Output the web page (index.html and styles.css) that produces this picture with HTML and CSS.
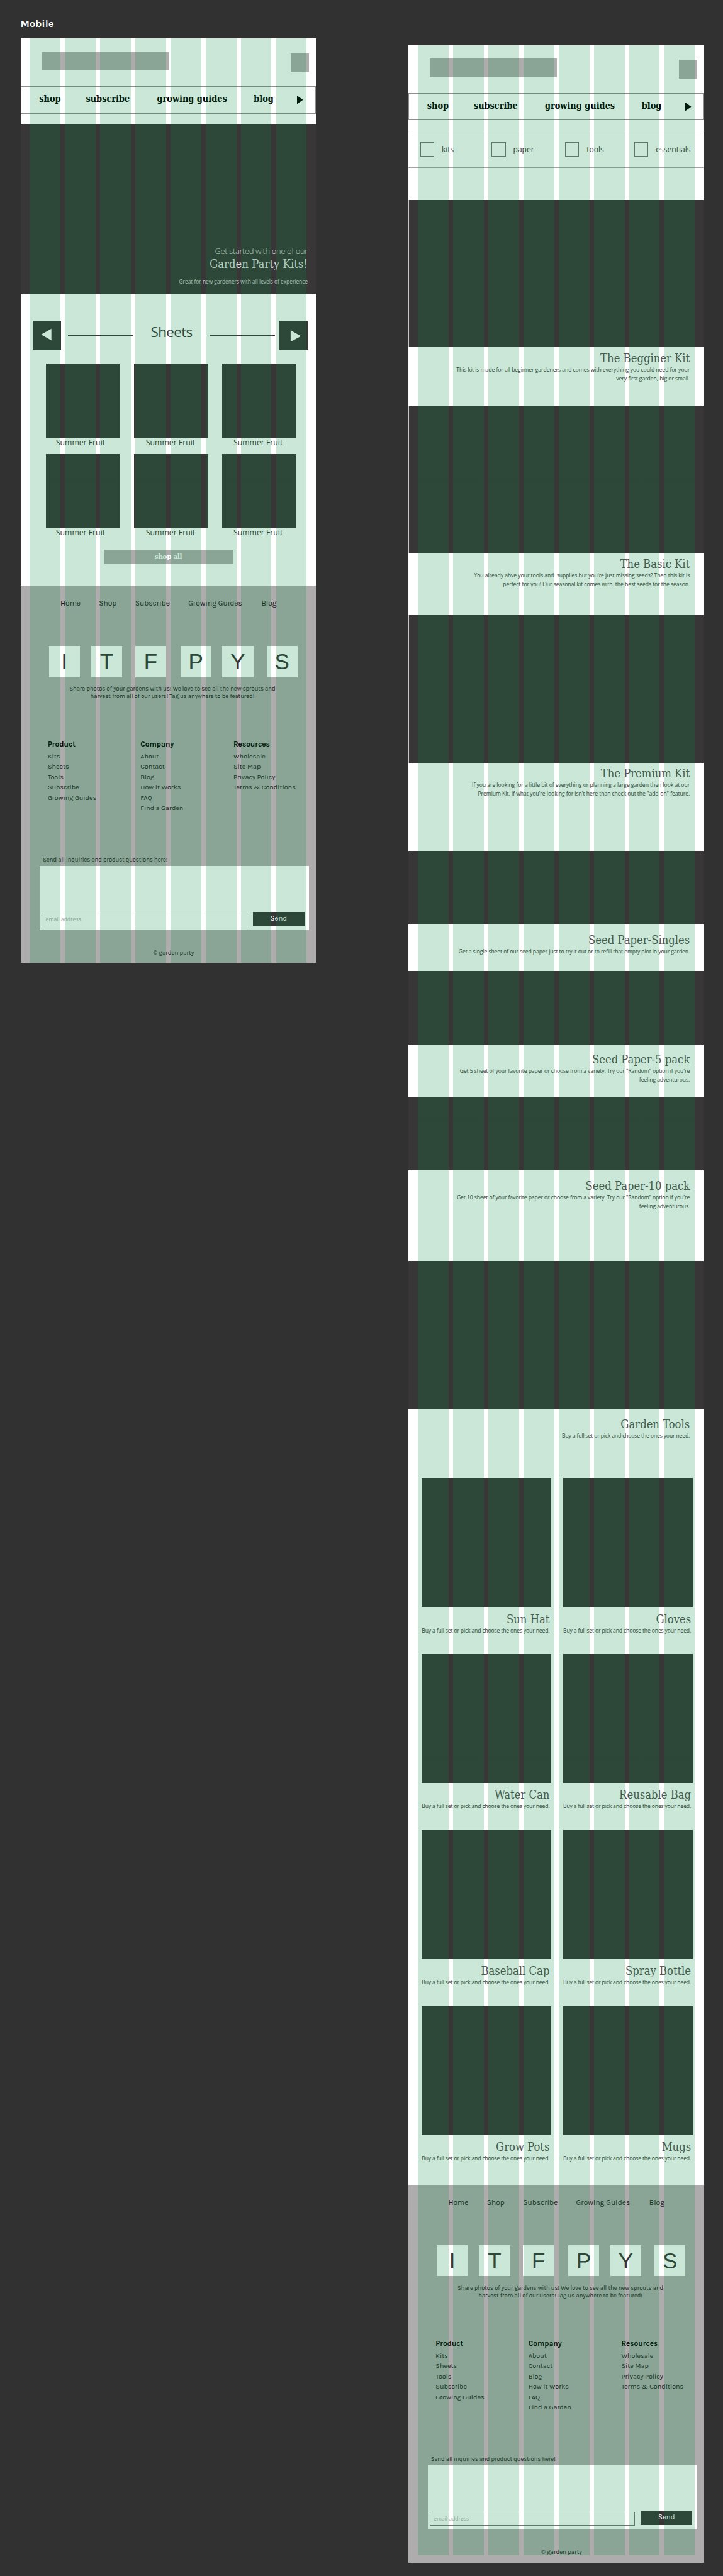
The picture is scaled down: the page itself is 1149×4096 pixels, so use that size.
FILE: index.html
```html
<!DOCTYPE html>
<html lang="en">
<head>
<meta charset="utf-8">
<title>Garden Party – Mobile</title>
<link rel="stylesheet" href="styles.css">
</head>
<body>
<main class="board">
  <section class="column">
    <h1 class="board-label">Mobile</h1>
    <div class="frame frame-home">
      <header class="masthead"><div class="brand"></div><div class="account"></div></header>
      <nav class="main-nav">
        <a>shop</a><a>subscribe</a><a>growing guides</a><a>blog</a>
        <svg class="nav-arrow" viewBox="0 0 10 14"><polygon points="0,0 10,7 0,14"/></svg>
      </nav>
      <section class="hero">
        <p class="hero-lead">Get started with one of our</p>
        <h2 class="hero-title">Garden Party Kits!</h2>
        <p class="hero-note">Great for new gardeners with all levels of experience</p>
      </section>
      <div class="carousel-head">
        <svg class="arrow-box" viewBox="0 0 47.6 47.6"><polygon points="31,13.2 31,32.5 13.9,22.8"/></svg>
        <span class="rule"></span>
        <h2 class="carousel-title">Sheets</h2>
        <span class="rule"></span>
        <svg class="arrow-box arrow-box-next" viewBox="0 0 47.6 47.6"><polygon points="18.7,15.8 18.7,35 35.8,25.4"/></svg>
      </div>
      <div class="sheets">
        <figure><div class="thumb"></div><figcaption>Summer Fruit</figcaption></figure>
        <figure><div class="thumb"></div><figcaption>Summer Fruit</figcaption></figure>
        <figure><div class="thumb"></div><figcaption>Summer Fruit</figcaption></figure>
        <figure><div class="thumb"></div><figcaption>Summer Fruit</figcaption></figure>
        <figure><div class="thumb"></div><figcaption>Summer Fruit</figcaption></figure>
        <figure><div class="thumb"></div><figcaption>Summer Fruit</figcaption></figure>
      </div>
      <div class="shop-all">shop all</div>
      <footer class="footer">
        <nav class="footer-nav"><a>Home</a><a>Shop</a><a>Subscribe</a><a>Growing Guides</a><a>Blog</a></nav>
        <div class="socials"><span>I</span><span>T</span><span>F</span><span>P</span><span>Y</span><span>S</span></div>
        <p class="share">Share photos of your gardens with us! We love to see all the new sprouts and<br>harvest from all of our users! Tag us anywhere to be featured!</p>
        <div class="links">
          <div><h3>Product</h3><ul><li>Kits</li><li>Sheets</li><li>Tools</li><li>Subscribe</li><li>Growing Guides</li></ul></div>
          <div><h3>Company</h3><ul><li>About</li><li>Contact</li><li>Blog</li><li>How it Works</li><li>FAQ</li><li>Find a Garden</li></ul></div>
          <div><h3>Resources</h3><ul><li>Wholesale</li><li>Site Map</li><li>Privacy Policy</li><li>Terms &amp; Conditions</li></ul></div>
        </div>
        <p class="ask">Send all inquiries and product questions here!</p>
        <div class="contact"><div class="email">email address</div><div class="send">Send</div></div>
        <p class="legal">© garden party</p>
      </footer>
    </div>
  </section>

  <section class="column column-shop">
    <div class="frame frame-shop">
      <header class="masthead"><div class="brand"></div><div class="account"></div></header>
      <nav class="main-nav">
        <a>shop</a><a>subscribe</a><a>growing guides</a><a>blog</a>
        <svg class="nav-arrow" viewBox="0 0 10 14"><polygon points="0,0 10,7 0,14"/></svg>
      </nav>
      <div class="filters">
        <label><i></i>kits</label><label><i></i>paper</label><label><i></i>tools</label><label><i></i>essentials</label>
      </div>

      <article class="product kit kit-beginner">
        <div class="photo"></div>
        <h2>The Begginer Kit</h2>
        <p>This kit is made for all beginner gardeners and comes with everything you could need for your<br>very first garden, big or small.</p>
      </article>
      <article class="product kit kit-basic">
        <div class="photo"></div>
        <h2>The Basic Kit</h2>
        <p>You already ahve your tools and&nbsp; supplies but you're just missing seeds? Then this kit is<br>perfect for you! Our seasonal kit comes with&nbsp; the best seeds for the season.</p>
      </article>
      <article class="product kit kit-premium">
        <div class="photo"></div>
        <h2>The Premium Kit</h2>
        <p>If you are looking for a little bit of everything or planning a large garden then look at our<br>Premium Kit. If what you're looking for isn't here than check out the "add-on" feature.</p>
      </article>
      <article class="product paper paper-single">
        <div class="photo"></div>
        <h2>Seed Paper-Singles</h2>
        <p>Get a single sheet of our seed paper just to try it out or to refill that empty plot in your garden.</p>
      </article>
      <article class="product paper paper-five">
        <div class="photo"></div>
        <h2>Seed Paper-5 pack</h2>
        <p>Get 5 sheet of your favorite paper or choose from a variety. Try our "Random" option if you're<br>feeling adventurous.</p>
      </article>
      <article class="product paper paper-ten">
        <div class="photo"></div>
        <h2>Seed Paper-10 pack</h2>
        <p>Get 10 sheet of your favorite paper or choose from a variety. Try our "Random" option if you're<br>feeling adventurous.</p>
      </article>
      <article class="product tools">
        <div class="photo"></div>
        <h2>Garden Tools</h2>
        <p>Buy a full set or pick and choose the ones your need.</p>
      </article>

      <div class="catalog">
        <article><div class="tile"></div><h2>Sun Hat</h2><p>Buy a full set or pick and choose the ones your need.</p></article>
        <article><div class="tile"></div><h2>Gloves</h2><p>Buy a full set or pick and choose the ones your need.</p></article>
        <article><div class="tile"></div><h2>Water Can</h2><p>Buy a full set or pick and choose the ones your need.</p></article>
        <article><div class="tile"></div><h2>Reusable Bag</h2><p>Buy a full set or pick and choose the ones your need.</p></article>
        <article><div class="tile"></div><h2>Baseball Cap</h2><p>Buy a full set or pick and choose the ones your need.</p></article>
        <article><div class="tile"></div><h2>Spray Bottle</h2><p>Buy a full set or pick and choose the ones your need.</p></article>
        <article><div class="tile"></div><h2>Grow Pots</h2><p>Buy a full set or pick and choose the ones your need.</p></article>
        <article><div class="tile"></div><h2>Mugs</h2><p>Buy a full set or pick and choose the ones your need.</p></article>
      </div>

      <footer class="footer">
        <nav class="footer-nav"><a>Home</a><a>Shop</a><a>Subscribe</a><a>Growing Guides</a><a>Blog</a></nav>
        <div class="socials"><span>I</span><span>T</span><span>F</span><span>P</span><span>Y</span><span>S</span></div>
        <p class="share">Share photos of your gardens with us! We love to see all the new sprouts and<br>harvest from all of our users! Tag us anywhere to be featured!</p>
        <div class="links">
          <div><h3>Product</h3><ul><li>Kits</li><li>Sheets</li><li>Tools</li><li>Subscribe</li><li>Growing Guides</li></ul></div>
          <div><h3>Company</h3><ul><li>About</li><li>Contact</li><li>Blog</li><li>How it Works</li><li>FAQ</li><li>Find a Garden</li></ul></div>
          <div><h3>Resources</h3><ul><li>Wholesale</li><li>Site Map</li><li>Privacy Policy</li><li>Terms &amp; Conditions</li></ul></div>
        </div>
        <p class="ask">Send all inquiries and product questions here!</p>
        <div class="contact"><div class="email">email address</div><div class="send">Send</div></div>
        <p class="legal">© garden party</p>
      </footer>
    </div>
  </section>
</main>
</body>
</html>
```
FILE: styles.css
```css
/* 1rem is ten design pixels */
html { font-size: 9.574px; }
* { box-sizing: border-box; margin: 0; padding: 0; }
body {
  background: #313131;
  color: #1c1a1b;
  font-family: Karla, "Liberation Sans", sans-serif;
  overflow: hidden;
}
h1, h2, h3 { font-weight: 400; }
ul { list-style: none; }

.board {
  display: grid;
  grid-template-columns: 49.03rem 49.07rem;
  column-gap: 15.36rem;
  align-items: start;
  padding-left: 3.4rem;
  height: 4096px;
}
.column-shop { padding-top: 7.51rem; }
.board-label {
  height: 6.4rem;
  padding-top: 2.8rem;
  color: #fff;
  font-weight: 700;
  font-size: 1.72rem;
  line-height: 2.2rem;
}

/* Artboards, with the eight-column layout grid laid over everything */
.frame { position: relative; background: #fff; overflow: hidden; }
.frame-home { height: 153.53rem; }
.frame-shop { height: 418.17rem; }
.frame::after {
  content: "";
  position: absolute;
  inset: 0 1.52rem 0 1.53rem;
  pointer-events: none;
  background: repeating-linear-gradient(90deg, rgba(0, 138, 61, .206) 0 5.09rem, transparent 5.09rem 5.845rem);
}
.frame-shop::after { bottom: 1.3rem; }

.masthead {
  display: flex;
  justify-content: space-between;
  height: 7.92rem;
  padding: 2.23rem 1.12rem 0 3.5rem;
}
.brand, .account { height: 3.07rem; background: #aeacad; }
.brand { width: 21.1rem; }
.account { width: 3.08rem; margin-top: .2rem; }

.main-nav {
  display: grid;
  grid-template-columns: 7.75rem 11.8rem 16.07rem 7.23rem auto;
  align-items: center;
  height: 4.56rem;
  padding-left: 3rem;
  border: 1px solid #8f8d8e;
  color: #000;
  font: 700 1.5rem/2rem "DejaVu Serif Condensed", "DejaVu Serif", serif;
}
.main-nav a { padding-bottom: .25rem; }
.nav-arrow { width: 1rem; height: 1.42rem; fill: #000; }

.hero {
  display: flex;
  flex-direction: column;
  justify-content: flex-end;
  align-items: flex-end;
  height: 28.1rem;
  margin-top: 1.75rem;
  padding: 0 1.36rem 1.25rem 0;
  background: #383637;
  color: #fff;
}
.hero-lead { font: 300 1.35rem/2rem "Open Sans", sans-serif; letter-spacing: -.037rem; color: #d8d8d8; }
.hero-title { font: 400 1.92rem/2.4rem "DejaVu Serif Condensed", serif; color: #dcdcdc; }
.hero-note { margin-top: .95rem; font: 400 .875rem/1.4rem "Open Sans", sans-serif; color: #cfcfcf; }

.carousel-head { display: flex; align-items: center; height: 4.78rem; margin-top: 4.59rem; padding-left: 2rem; }
.arrow-box { width: 4.76rem; height: 4.78rem; background: #383637; fill: #fff; }
.rule { width: 10.89rem; height: 1px; margin-left: 1.1rem; background: #383637; }
.carousel-title {
  width: 12.65rem;
  padding-bottom: 1.08rem;
  color: #383637;
  font: 400 2.35rem/3rem "Open Sans", sans-serif;
  letter-spacing: -.07rem;
  text-align: center;
}
.carousel-title + .rule { margin-left: 0; }
.arrow-box-next { margin-left: .72rem; }

.sheets {
  display: grid;
  grid-template-columns: repeat(3, 12.25rem);
  gap: 1.19rem 2.39rem;
  margin-top: 2.33rem;
  padding-left: 4.24rem;
}
.thumb { height: 12.24rem; background: #383637; }
.sheets figcaption {
  padding-right: .8rem;
  color: #383637;
  font: 400 1.28rem/1.6rem "Open Sans", sans-serif;
  text-align: center;
}
.sheets figure:nth-child(3n + 2) figcaption { padding-right: .2rem; }
.sheets figure:nth-child(3n) figcaption { padding-right: .4rem; }
.sheets figure:nth-child(n + 4) figcaption { margin-top: -.1rem; }

.shop-all {
  width: 21.46rem;
  height: 2.43rem;
  margin: 2.07rem 0 3.6rem 13.81rem;
  background: #aeacad;
  color: #fff;
  font: 700 1.2rem/2.3rem "DejaVu Serif Condensed", serif;
  letter-spacing: -.03rem;
  text-align: center;
}

/* Footer shared by both artboards */
.footer { height: 62.7rem; padding-top: 2.16rem; background: #aeacad; }
.footer-nav {
  display: grid;
  grid-template-columns: 6.39rem 6rem 8.82rem 12.14rem auto;
  padding-left: 6.64rem;
  font-size: 1.25rem;
  line-height: 1.6rem;
}
.socials {
  display: grid;
  grid-template-columns: 7.04rem 7.29rem 7.5rem 6.97rem 7.35rem 5.15rem;
  margin-top: 6.24rem;
  padding-left: 4.7rem;
}
.socials span {
  width: 5.15rem;
  height: 5.16rem;
  background: #fff;
  color: #383637;
  font: 400 3.66rem/5.2rem "Liberation Sans", Arial, sans-serif;
  text-align: center;
}
.share { margin-top: 1.31rem; padding-left: 1.4rem; font-size: .983rem; line-height: 1.25rem; text-align: center; }
.links { display: grid; grid-template-columns: 15.39rem 15.43rem auto; height: 12.42rem; margin-top: 6.45rem; padding-left: 4.53rem; }
.links h3 { margin-bottom: .38rem; color: #000; font-weight: 700; font-size: 1.24rem; line-height: 1.72rem; }
.links li { font-size: 1.13rem; line-height: 1.72rem; }
.ask { margin-top: 6.91rem; padding-left: 3.74rem; font-size: .98rem; line-height: 1.4rem; }
.contact {
  display: flex;
  align-items: flex-end;
  width: 44.69rem;
  height: 10.67rem;
  margin: .43rem 0 0 3.2rem;
  padding: 0 0 .67rem .33rem;
  background: #fff;
}
.email {
  width: 34.1rem;
  height: 2.35rem;
  padding-left: .55rem;
  border: 1px solid #777576;
  color: #aeacad;
  font: 400 .9rem/2.1rem "Open Sans", sans-serif;
}
.send {
  width: 8.54rem;
  height: 2.33rem;
  margin: 0 0 .13rem .96rem;
  background: #383637;
  color: #fff;
  font-size: 1.2rem;
  line-height: 2.2rem;
  text-align: center;
}
.legal { margin-top: 3.01rem; padding-left: 1.8rem; font-size: 1.01rem; line-height: 1.4rem; text-align: center; }

/* Shop artboard */
.filters {
  display: grid;
  grid-template-columns: 11.87rem 12.18rem 11.5rem auto;
  align-items: center;
  height: 6.1rem;
  margin-top: 1.78rem;
  padding-left: 1.96rem;
  border-top: 1px solid #b5b3b4;
  border-bottom: 1px solid #a5a3a4;
  color: #383637;
  font: 400 1.26rem/2rem "Open Sans", sans-serif;
}
.filters label { display: flex; align-items: center; gap: 1.23rem; }
.filters i { width: 2.34rem; height: 2.33rem; border: 1px solid #777576; }

.product { padding-right: 2.36rem; text-align: right; }
.product .photo { height: 24.5rem; margin-right: -2.36rem; background: #383637; }
.kit .photo { border-left: 1px solid #c9c9c9; }
.paper .photo { height: 12.24rem; }
.product h2, .catalog h2 { color: #555354; font: 400 1.91rem/2.3rem "DejaVu Serif Condensed", serif; }
.product p, .catalog p { color: #383637; font: 400 .9rem/1.47rem "Open Sans", sans-serif; white-space: nowrap; }
.kit p { letter-spacing: -.006rem; }
.paper p { letter-spacing: -.01rem; }
.tools p, .catalog p { letter-spacing: -.016rem; }
.product h2 { padding-top: 1.43rem; }
.kit h2 { padding-top: .68rem; }
.kit-beginner { height: 34.21rem; margin-top: 5.3rem; }
.kit-basic { height: 34.8rem; }
.kit-premium { height: 39.18rem; }
.paper-single { height: 19.87rem; }
.paper-five { height: 20.95rem; }
.paper-ten { height: 27.29rem; }
.tools { height: 35.98rem; }

.catalog {
  display: grid;
  grid-template-columns: 21.5rem 21.47rem;
  grid-auto-rows: 29.24rem;
  column-gap: 2rem;
  margin-bottom: .5rem;
  padding-left: 2.21rem;
  text-align: right;
}
.tile { height: 21.4rem; margin-bottom: .92rem; background: #383637; }
.catalog h2, .catalog p { padding-right: .27rem; }
.catalog p { display: flex; justify-content: flex-end; }
```
